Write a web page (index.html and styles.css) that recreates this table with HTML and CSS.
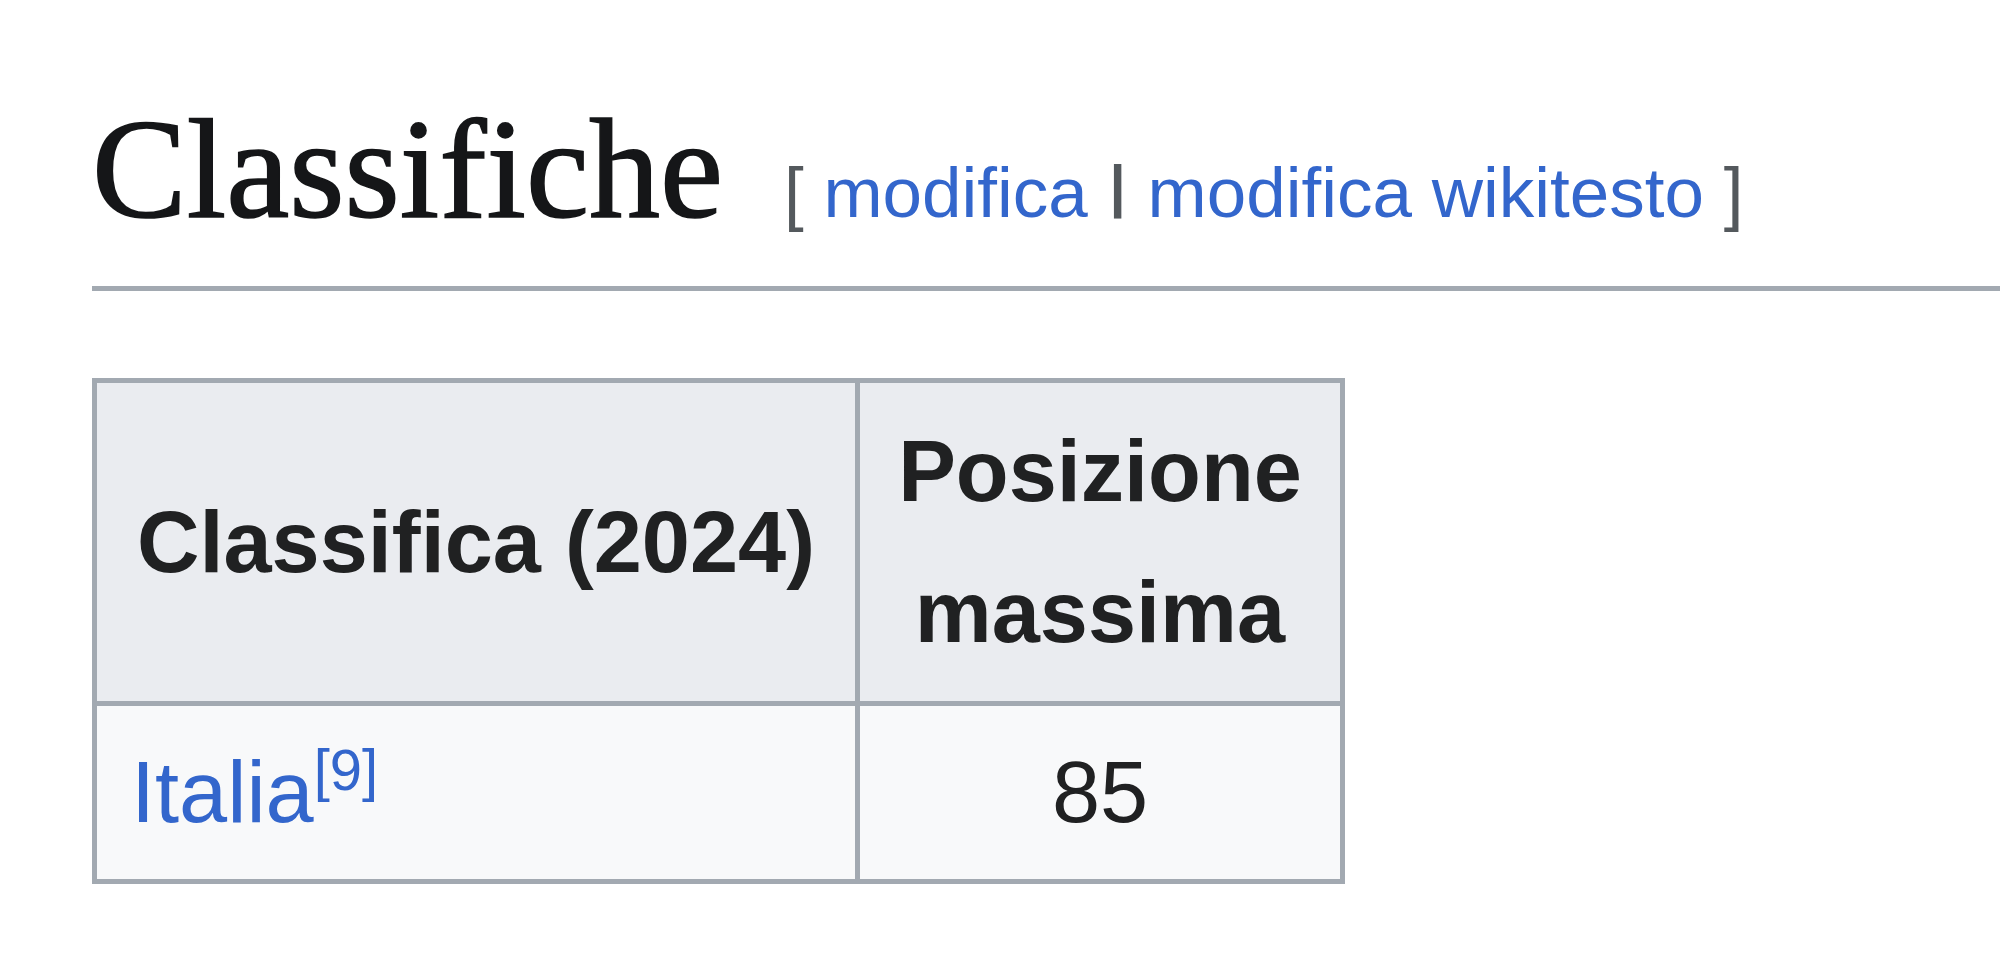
FILE: index.html
```html
<!DOCTYPE html>
<html lang="it">
<head>
<meta charset="utf-8">
<title>Classifiche</title>
<link rel="stylesheet" href="styles.css">
</head>
<body>
<div class="page">
  <h2 class="heading"><span class="headline">Classifiche</span><span class="editsection"><span class="bracket">[</span> <a href="#" class="link">modifica</a> <span class="divider">|</span> <a href="#" class="link">modifica wikitesto</a> <span class="bracket">]</span></span></h2>
  <table class="wikitable">
    <thead>
      <tr>
        <th class="col-chart">Classifica (2024)</th>
        <th class="col-pos">Posizione<br>massima</th>
      </tr>
    </thead>
    <tbody>
      <tr>
        <td class="cell-left"><a href="#" class="link">Italia</a><sup class="reference"><a href="#" class="link">[9]</a></sup></td>
        <td class="cell-center">85</td>
      </tr>
    </tbody>
  </table>
</div>
</body>
</html>
```

FILE: styles.css
```css
html, body {
  margin: 0;
  padding: 0;
  background: #ffffff;
}

body {
  font-family: "Liberation Sans", Arial, sans-serif;
  color: #202122;
}

.page {
  padding: 89px 0 0 92px;
}

.heading {
  margin: 0;
  padding: 0 0 13px 0;
  border-bottom: 5px solid #a2a9b1;
  font-family: "Liberation Serif", "Times New Roman", serif;
  font-weight: normal;
  font-size: 142px;
  line-height: 160px;
  color: #151618;
  white-space: nowrap;
}

.headline {
  -webkit-text-stroke: 1.6px #151618;
}

.editsection {
  margin-left: 61px;
  font-family: "Liberation Sans", Arial, sans-serif;
  font-size: 71px;
  color: #54595d;
}

.bracket {
  color: #54595d;
}

.divider {
  color: #54595d;
  font-weight: bold;
  font-size: 58px;
  vertical-align: 11px;
  padding: 0 2px;
}

.link {
  color: #3366cc;
  text-decoration: none;
}

.wikitable {
  margin-top: 87px;
  border-collapse: collapse;
  border: 5px solid #a2a9b1;
  background: #f8f9fa;
  font-size: 86.5px;
  line-height: 141px;
  color: #202122;
}

.wikitable th,
.wikitable td {
  border: 5px solid #a2a9b1;
}

.wikitable th {
  background: #eaecf0;
  font-weight: bold;
  text-align: center;
  padding: 18px 34px;
}

.wikitable td {
  padding: 16px 34px;
}

.col-chart {
  width: 690px;
}

.col-pos {
  width: 412px;
}

.cell-left {
  text-align: left;
}

.cell-center {
  text-align: center;
}

.reference {
  font-size: 58px;
  line-height: 1;
  vertical-align: 32px;
}
```
